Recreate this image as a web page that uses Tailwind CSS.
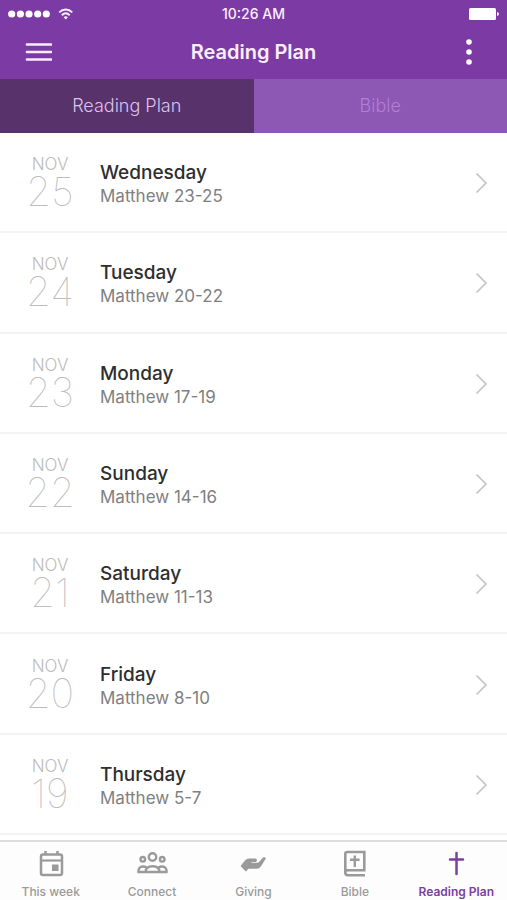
<!DOCTYPE html>
<html lang="en">
<head>
<meta charset="utf-8">
<meta name="viewport" content="width=device-width, initial-scale=1">
<title>Reading Plan</title>
<script src="https://cdn.jsdelivr.net/npm/@tailwindcss/browser@4"></script>
</head>
<body class="flex min-h-screen flex-col bg-white font-['Inter','Liberation_Sans',sans-serif]">
<header class="bg-[#7b3aa4] text-[#fbeeff]">
  <div class="grid h-7 grid-cols-3 items-center px-2">
    <div class="flex items-center gap-2">
      <svg class="h-2 w-[42px]" viewBox="0 0 42 8" fill="#fff" aria-label="Signal"><circle cx="3.7" cy="4" r="3.6"/><circle cx="12.4" cy="4" r="3.6"/><circle cx="21" cy="4" r="3.6"/><circle cx="29.7" cy="4" r="3.6"/><circle cx="38.3" cy="4" r="3.6"/></svg>
      <svg class="h-3 w-4" viewBox="0 0 16 12" fill="none" stroke="currentColor" stroke-width="1.9" aria-label="Wi-Fi"><path d="M1.2 4.4C5 .6 10.300 .6 14.300 4.400M3.800 7.200C6.200 4.900 9.300 4.900 11.700 7.200"/><path d="M5.600 9.200Q7.750 7.400 9.900 9.200L7.750 11.600Z" fill="currentColor" stroke="none"/></svg>
    </div>
    <time class="text-center text-sm font-medium">10:26 AM</time>
    <svg class="h-3 w-[30px] justify-self-end" viewBox="0 0 30 12" fill="#fff" aria-label="Battery"><rect width="27" height="12" rx="1.500"/><path d="M28 4q2 .5 2 2t-2 2z"/></svg>
  </div>
  <div class="flex h-[51px] items-center justify-between px-6 pb-1">
    <button type="button" aria-label="Open menu" class="flex h-10 w-7 items-center justify-center">
      <svg class="h-5 w-7" viewBox="0 0 28 20" stroke="currentColor" stroke-width="2.700" stroke-linecap="round"><path d="M3 2.500H27M3 10H27M3 17.500H27"/></svg>
    </button>
    <h1 class="text-xl font-semibold">Reading Plan</h1>
    <button type="button" aria-label="More options" class="flex h-10 w-7 items-center justify-center">
      <svg class="h-7 w-2" viewBox="0 0 8 28" fill="#fff"><circle cx="4" cy="4" r="2.800"/><circle cx="4" cy="14" r="2.800"/><circle cx="4" cy="24" r="2.800"/></svg>
    </button>
  </div>
  <div role="tablist" class="grid h-[54px] grid-cols-2 text-lg font-light">
    <button type="button" role="tab" aria-selected="true" class="bg-[#57326b] text-[#dfc3ee]">Reading Plan</button>
    <button type="button" role="tab" aria-selected="false" class="bg-[#8c58b3] text-[#b27fd3]">Bible</button>
  </div>
</header>
<main class="flex flex-1 flex-col pb-[5px]">
  <ul id="days" class="grid flex-1 auto-rows-fr"></ul>
</main>
<template id="day">
  <li class="flex border-b-2 border-[#f3f3f3]">
    <a href="#" class="flex min-h-24 flex-1 items-center pt-1 pr-[18px]">
      <time class="flex w-[100px] flex-col items-center text-[#bcbcbc]">
        <span class="text-[17px] leading-4 font-light">NOV</span>
        <span data-n class="text-[40px] leading-10 font-thin"></span>
      </time>
      <span class="flex flex-1 flex-col">
        <span data-d class="text-[19px] leading-6 font-medium text-[#2e2e2e]"></span>
        <span data-p class="text-[17px] leading-[22px] text-[#808080]"></span>
      </span>
      <svg class="h-6 w-4" viewBox="0 0 16 24" fill="none" stroke="#c4c4c4" stroke-width="1.700" aria-hidden="true"><path d="M3.500 1.500L13 11L3.500 20.500"/></svg>
    </a>
  </li>
</template>
<nav class="grid h-[60px] grid-cols-5 border-t-2 border-[#dedede] bg-[#fdfdfd] text-xs font-medium text-[#9a9a9a]">
  <a href="#" class="flex flex-col items-center pt-2">
    <svg class="h-7 w-8" viewBox="0 0 32 28" fill="none" stroke="currentColor" stroke-width="2.500"><rect x="6" y="4.500" width="21" height="20.500" rx="2"/><path d="M6 10.500H27" stroke-width="2.200"/><path d="M10.500 1V5M22.500 1V5"/><rect x="17" y="14.500" width="6.500" height="6.500" fill="currentColor" stroke="none"/></svg>
    <span class="mt-1 leading-5">This week</span>
  </a>
  <a href="#" class="flex flex-col items-center pt-2">
    <svg class="h-7 w-8" viewBox="0 0 32 28" fill="none" stroke="currentColor" stroke-width="2.400"><circle cx="16.500" cy="7" r="3.700"/><circle cx="6.800" cy="9.300" r="2.300"/><circle cx="26.200" cy="9.300" r="2.300"/><path d="M9.500 22C9.500 18.500 11.500 16.300 16.500 16.300S23.500 18.500 23.500 22M9.500 22H2.500C2 18.500 4 16.500 7 16.500Q9 16.500 10.500 17.500M23.500 22H30.500C31 18.500 29 16.500 26 16.500Q24 16.500 22.500 17.500M9.500 22H23.500"/></svg>
    <span class="mt-1 leading-5">Connect</span>
  </a>
  <a href="#" class="flex flex-col items-center pt-2">
    <svg class="h-7 w-8" viewBox="0 0 32 28" fill="currentColor"><path d="M3.500 16L8 10.500Q9.500 8.500 12 8.500H18.500Q20.200 8.800 19.800 10.500L19.300 12H14.500V12.800H20Q21.500 12.800 22.500 11.500L25.500 8Q27.500 6.500 29 8.200L24 16.200Q22.500 18.700 19.500 18.700H11.500L8.800 21.500Z"/></svg>
    <span class="mt-1 leading-5">Giving</span>
  </a>
  <a href="#" class="flex flex-col items-center pt-2">
    <svg class="h-7 w-8" viewBox="0 0 32 28" fill="none" stroke="currentColor" stroke-width="2.600"><path d="M26 25.200H9Q6.300 25.200 6.300 22.500V4Q6.300 2 8.300 2H25.300V20.300H8.500Q6.300 20.300 6.300 23"/><path d="M15.800 5.500V17M11 9.800H20.600" stroke-width="2.400"/></svg>
    <span class="mt-1 leading-5">Bible</span>
  </a>
  <a href="#" aria-current="page" class="flex flex-col items-center pt-2 font-semibold text-[#7b3f9f]">
    <svg class="h-7 w-8" viewBox="0 0 32 28" fill="none" stroke="currentColor" stroke-width="2.500" stroke-linecap="round"><path d="M16.500 3V24M10 9.500H23"/></svg>
    <span class="mt-1 leading-5 whitespace-nowrap">Reading Plan</span>
  </a>
</nav>
<script>
const days = [
  [25, 'Wednesday', 'Matthew 23-25'],
  [24, 'Tuesday', 'Matthew 20-22'],
  [23, 'Monday', 'Matthew 17-19'],
  [22, 'Sunday', 'Matthew 14-16'],
  [21, 'Saturday', 'Matthew 11-13'],
  [20, 'Friday', 'Matthew 8-10'],
  [19, 'Thursday', 'Matthew 5-7']
];
for (const [n, d, p] of days) {
  const row = document.getElementById('day').content.cloneNode(true);
  row.querySelector('[data-n]').textContent = n;
  row.querySelector('[data-d]').textContent = d;
  row.querySelector('[data-p]').textContent = p;
  document.getElementById('days').append(row);
}
</script>
</body>
</html>
